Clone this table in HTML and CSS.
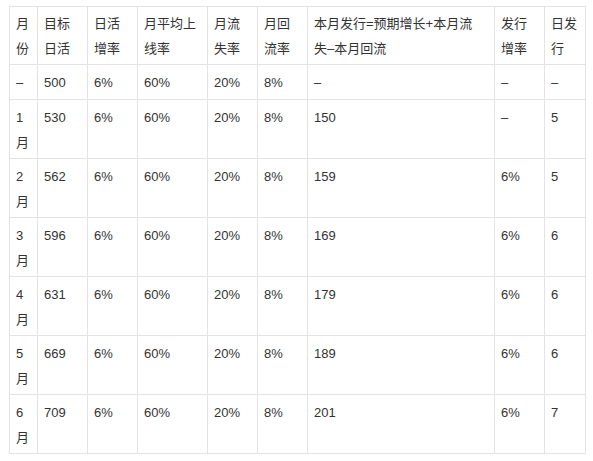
FILE: index.html
```html
<!DOCTYPE html>
<html lang="zh">
<head>
<meta charset="utf-8">
<link rel="stylesheet" href="styles.css">
</head>
<body>
<div class="wrap">
<table class="grid">
<colgroup>
<col class="c1"><col class="c2"><col class="c3"><col class="c4"><col class="c5"><col class="c6"><col class="c7"><col class="c8"><col class="c9">
</colgroup>
<thead>
<tr><th>月份</th><th>目标日活</th><th>日活增率</th><th>月平均上线率</th><th>月流失率</th><th>月回流率</th><th>本月发行=预期增长+本月流失–本月回流</th><th>发行增率</th><th>日发行</th></tr>
</thead>
<tbody>
<tr class="short"><td>–</td><td>500</td><td>6%</td><td>60%</td><td>20%</td><td>8%</td><td>–</td><td>–</td><td>–</td></tr>
<tr><td>1月</td><td>530</td><td>6%</td><td>60%</td><td>20%</td><td>8%</td><td>150</td><td>–</td><td>5</td></tr>
<tr><td>2月</td><td>562</td><td>6%</td><td>60%</td><td>20%</td><td>8%</td><td>159</td><td>6%</td><td>5</td></tr>
<tr><td>3月</td><td>596</td><td>6%</td><td>60%</td><td>20%</td><td>8%</td><td>169</td><td>6%</td><td>6</td></tr>
<tr><td>4月</td><td>631</td><td>6%</td><td>60%</td><td>20%</td><td>8%</td><td>179</td><td>6%</td><td>6</td></tr>
<tr><td>5月</td><td>669</td><td>6%</td><td>60%</td><td>20%</td><td>8%</td><td>189</td><td>6%</td><td>6</td></tr>
<tr><td>6月</td><td>709</td><td>6%</td><td>60%</td><td>20%</td><td>8%</td><td>201</td><td>6%</td><td>7</td></tr>
</tbody>
</table>
</div>
</body>
</html>
```
FILE: styles.css
```css
html, body {
  margin: 0;
  background: #ffffff;
}
.wrap {
  padding: 6px 0 0 9px;
}
.grid {
  border-collapse: collapse;
  table-layout: fixed;
  width: 576px;
  font-family: "Liberation Sans", "Noto Sans CJK SC", sans-serif;
  font-size: 13px;
  color: #333333;
}
.c1 { width: 28px; }
.c2 { width: 50px; }
.c3 { width: 50px; }
.c4 { width: 70px; }
.c5 { width: 50px; }
.c6 { width: 50px; }
.c7 { width: 187px; }
.c8 { width: 50px; }
.c9 { width: 41px; }
.grid th,
.grid td {
  border: 1px solid #e3e3e3;
  padding: 5px 6px 3px 6px;
  line-height: 25px;
  text-align: left;
  vertical-align: top;
  font-weight: normal;
  word-break: break-all;
}
.grid th {
  padding-top: 4px;
  padding-bottom: 3px;
}
.grid tr.short td {
  padding-top: 5px;
  padding-bottom: 4px;
}
```
